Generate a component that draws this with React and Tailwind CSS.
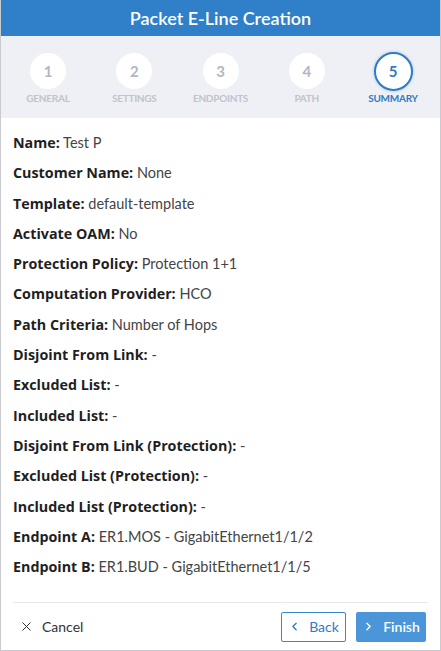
import React from "react";
import { X, ChevronLeft, ChevronRight } from "lucide-react";

const steps = [
  { n: 1, label: "GENERAL" },
  { n: 2, label: "SETTINGS" },
  { n: 3, label: "ENDPOINTS" },
  { n: 4, label: "PATH" },
  { n: 5, label: "SUMMARY", active: true },
];

const rows = [
  ["Name:", "Test P"],
  ["Customer Name:", "None"],
  ["Template:", "default-template"],
  ["Activate OAM:", "No"],
  ["Protection Policy:", "Protection 1+1"],
  ["Computation Provider:", "HCO"],
  ["Path Criteria:", "Number of Hops"],
  ["Disjoint From Link:", "-"],
  ["Excluded List:", "-"],
  ["Included List:", "-"],
  ["Disjoint From Link (Protection):", "-"],
  ["Excluded List (Protection):", "-"],
  ["Included List (Protection):", "-"],
  ["Endpoint A:", "ER1.MOS - GigabitEthernet1/1/2"],
  ["Endpoint B:", "ER1.BUD - GigabitEthernet1/1/5"],
];

const App = () => {
  return (
    <div
      className="w-[441px] h-[651px] flex flex-col bg-white border-x border-b border-[#c9cbd0] overflow-hidden"
      style={{ fontFamily: "Lato, 'Open Sans', sans-serif" }}
    >
      {/* header */}
      <div className="h-[36px] shrink-0 bg-[#2f80c9] flex items-center justify-center">
        <h1 className="text-[18px] font-semibold text-white">Packet E-Line Creation</h1>
      </div>

      {/* stepper */}
      <div className="h-[82px] shrink-0 bg-[#eef0f5] flex justify-between px-[4px] pt-[17px]">
        {steps.map((s) => (
          <div key={s.n} className="w-[86px] flex flex-col items-center">
            {s.active ? (
              <div className="w-[39px] h-[39px] -mt-[1px] rounded-full bg-white border-2 border-[#2f7bc4] flex items-center justify-center text-[15px] font-bold text-[#2f7bc4] shadow-[0_0_3px_rgba(47,123,196,0.4)]">
                {s.n}
              </div>
            ) : (
              <div className="w-[36px] h-[36px] rounded-full bg-white flex items-center justify-center text-[15px] font-bold text-[#b3b7c2]">
                {s.n}
              </div>
            )}
            <span
              className={
                s.active
                  ? "mt-[0px] text-[10px] font-bold tracking-tight text-[#2f7bc4]"
                  : "mt-[2px] text-[10px] font-bold tracking-tight text-[#bfc3cd]"
              }
            >
              {s.label}
            </span>
          </div>
        ))}
      </div>

      {/* summary */}
      <div className="flex-1 flex flex-col px-[12px] pt-[10px]">
        {rows.map(([k, v]) => (
          <div key={k} className="leading-[30.3px] text-[14.5px] text-[#444] whitespace-nowrap">
            <span className="font-bold text-[14.3px] text-[#1f1f1f] font-['Open_Sans',sans-serif]">{k}</span>{" "}
            <span>{v}</span>
          </div>
        ))}
      </div>

      {/* footer */}
      <div className="mx-[12px] border-t border-[#e6e8ec]" />
      <div className="h-[47px] shrink-0 flex items-center justify-between pl-[18px] pr-[14px]">
        <button className="flex items-center gap-[8px] text-[14px] text-[#333]">
          <X size={15} strokeWidth={1.6} />
          Cancel
        </button>
        <div className="flex items-center gap-[10px]">
          <button className="h-[30px] w-[65px] flex items-center justify-center gap-[8px] rounded-[2px] border border-[#3a86cc] bg-white text-[14px] text-[#2f7bc4]">
            <ChevronLeft size={13} strokeWidth={2.5} />
            Back
          </button>
          <button className="h-[30px] w-[70px] flex items-center justify-center gap-[8px] rounded-[2px] bg-[#4b96d9] text-[14px] font-semibold text-white">
            <ChevronRight size={13} strokeWidth={2.5} />
            Finish
          </button>
        </div>
      </div>
    </div>
  );
};

export default App;
